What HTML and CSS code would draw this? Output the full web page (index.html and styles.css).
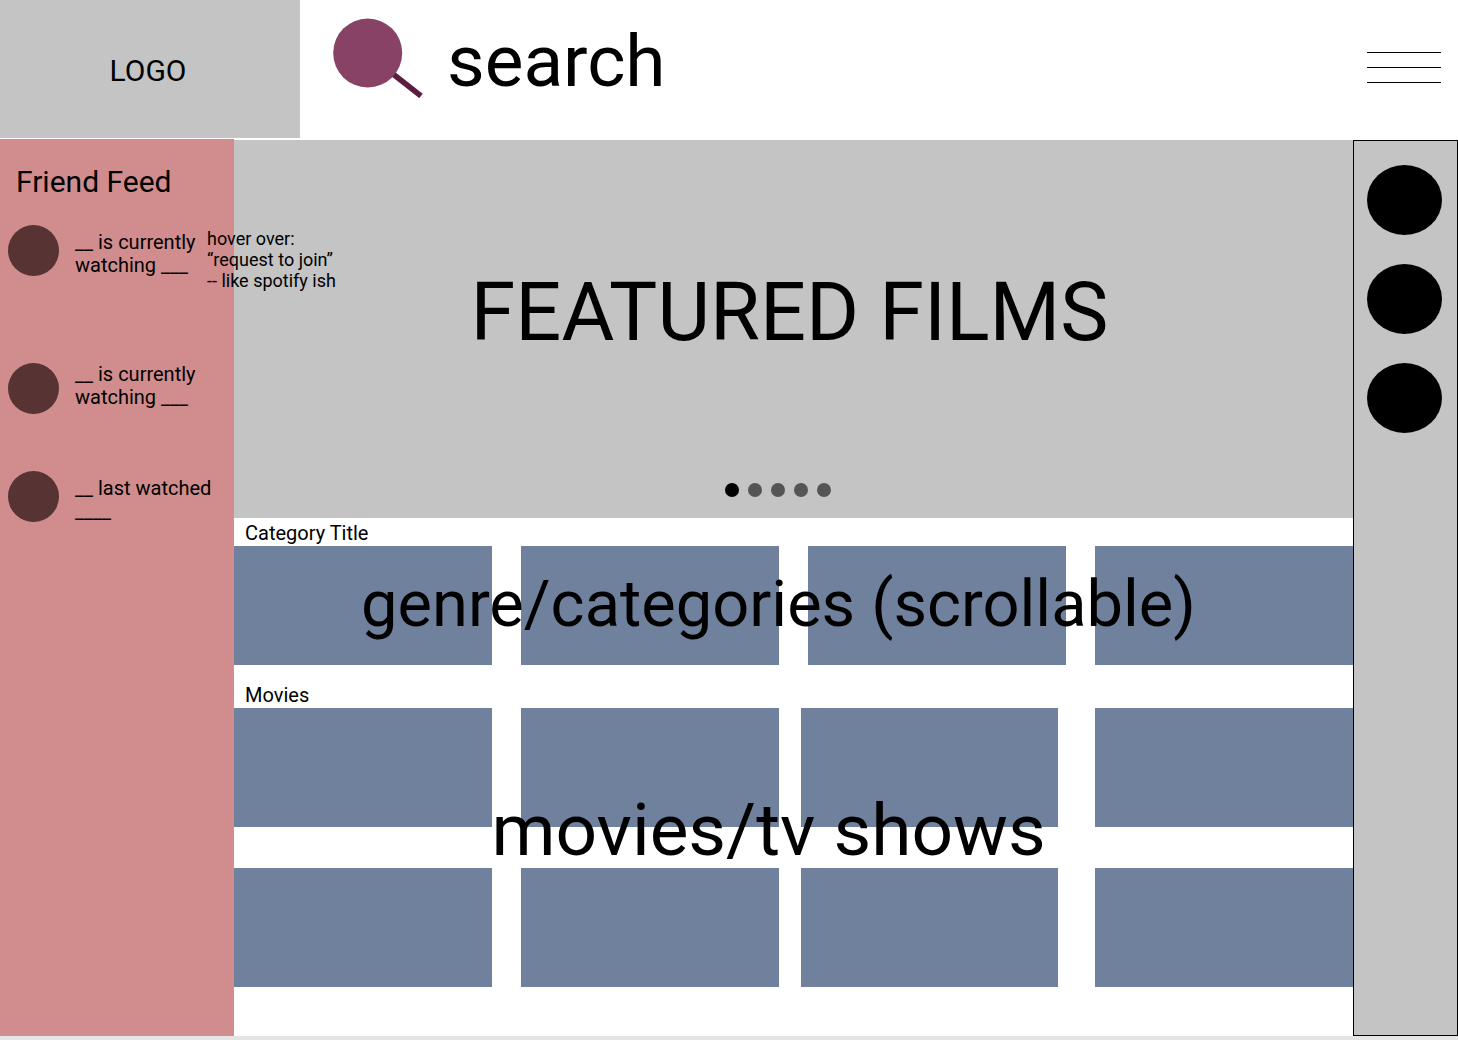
FILE: index.html
```html
<!DOCTYPE html>
<html lang="en">
<head>
<meta charset="utf-8">
<meta name="viewport" content="width=device-width, initial-scale=1">
<title>Featured Films</title>
<link rel="stylesheet" href="styles.css">
</head>
<body>
<div class="app">
  <header class="topbar">
    <a class="logo" href="#">LOGO</a>
    <form class="search" role="search">
      <label class="search-label" for="search" aria-label="Search">
        <svg width="90" height="80" viewBox="0 0 90 80" aria-hidden="true">
          <path d="M60 56 88 78" stroke="#5c1d40" stroke-width="5.5"/>
          <circle cx="34.700" cy="35" r="34.500" fill="#874266"/>
        </svg>
      </label>
      <input class="search-input" id="search" type="text" placeholder="search">
    </form>
    <button class="menu" type="button" aria-label="Menu">
      <span class="menu-line"></span>
      <span class="menu-line"></span>
      <span class="menu-line"></span>
    </button>
  </header>
  <div class="layout">
    <aside class="feed">
      <h2 class="feed-title">Friend Feed</h2>
      <ul class="feed-list">
        <li class="friend friend-joinable">
          <span class="avatar"></span>
          <p class="status">__ is currently watching ___</p>
          <p class="join-note">hover over:<br>“request to join”<br>-- like spotify ish</p>
        </li>
        <li class="friend">
          <span class="avatar"></span>
          <p class="status">__ is currently watching ___</p>
        </li>
        <li class="friend friend-past">
          <span class="avatar"></span>
          <p class="status">__ last watched ____</p>
        </li>
      </ul>
    </aside>
    <main class="content">
      <section class="featured">
        <h1 class="featured-title">FEATURED FILMS</h1>
        <div class="dots">
          <button class="dot dot-active" type="button" aria-label="Slide 1"></button>
          <button class="dot" type="button" aria-label="Slide 2"></button>
          <button class="dot" type="button" aria-label="Slide 3"></button>
          <button class="dot" type="button" aria-label="Slide 4"></button>
          <button class="dot" type="button" aria-label="Slide 5"></button>
        </div>
      </section>
      <section class="shelf">
        <h2 class="shelf-title">Category Title</h2>
        <div class="rows">
          <ul class="row">
            <li class="card"></li><li class="card"></li><li class="card"></li><li class="card"></li>
          </ul>
          <p class="caption caption-genres">genre/categories (scrollable)</p>
        </div>
      </section>
      <section class="shelf shelf-movies">
        <h2 class="shelf-title">Movies</h2>
        <div class="rows">
          <ul class="row row-staggered">
            <li class="card"></li><li class="card"></li><li class="card"></li><li class="card"></li>
          </ul>
          <ul class="row row-staggered">
            <li class="card"></li><li class="card"></li><li class="card"></li><li class="card"></li>
          </ul>
          <p class="caption caption-movies">movies/tv shows</p>
        </div>
      </section>
    </main>
    <nav class="rail" aria-label="Profiles">
      <button class="profile" type="button" aria-label="Profile 1"></button>
      <button class="profile" type="button" aria-label="Profile 2"></button>
      <button class="profile" type="button" aria-label="Profile 3"></button>
    </nav>
  </div>
</div>
</body>
</html>
```
FILE: styles.css
```css
* {
  box-sizing: border-box;
}

body {
  margin: 0;
  background: #e5e5e5;
  color: #000;
  font-family: Roboto, "Liberation Sans", sans-serif;
  font-size: 20px;
  line-height: 23px;
}

h1, h2, p, ul {
  margin: 0;
  padding: 0;
  font-weight: 400;
}

ul {
  list-style: none;
}

button {
  padding: 0;
  border: 0;
  cursor: pointer;
}

.app {
  display: flex;
  flex-direction: column;
  min-height: calc(100vh - 4px);
  margin-bottom: 4px;
  background: #fff;
}

/* Top bar */
.topbar {
  display: flex;
  align-items: flex-start;
  padding-bottom: 1px;
}

.logo {
  display: flex;
  flex: none;
  align-items: center;
  justify-content: center;
  width: 300px;
  height: 138px;
  padding: 2px 4px 0 0;
  background: #c4c4c4;
  color: inherit;
  font-size: 30px;
  text-decoration: none;
}

.search {
  display: flex;
  flex: 1;
  gap: 24px;
  min-width: 0;
  padding: 18px 32px 0 33px;
}

.search-label svg {
  display: block;
}

.search-input {
  flex: 1;
  min-width: 0;
  height: 86px;
  padding: 0;
  border: 0;
  outline: 0;
  background: none;
  color: inherit;
  font: inherit;
  font-size: 73px;
  line-height: 86px;
}

.search-input::placeholder {
  color: #000;
  opacity: 1;
}

.menu {
  display: flex;
  flex: none;
  flex-direction: column;
  gap: 14px;
  width: 74px;
  margin: 52px 17px 0 0;
  background: none;
}

.menu-line {
  width: 100%;
  height: 1px;
  background: #000;
}

/* Columns under the bar */
.layout {
  display: grid;
  flex: 1;
  grid-template-columns: 234px 1fr 105px;
}

/* Friend feed */
.feed {
  padding: 25px 8px 0;
  background: #d18d8d;
}

.feed-title {
  padding-left: 8px;
  font-size: 30px;
  line-height: 35px;
}

.feed-list {
  padding-top: 26px;
}

.friend {
  position: relative;
  display: flex;
  align-items: flex-start;
  gap: 16px;
  margin-bottom: 57px;
}

.friend-joinable {
  margin-bottom: 86px;
}

.avatar {
  flex: none;
  width: 51px;
  height: 51px;
  border-radius: 50%;
  background: #573333;
}

.status {
  flex: 1;
}

.friend-joinable .status,
.friend-past .status {
  padding-top: 6px;
}

.join-note {
  position: absolute;
  top: 3px;
  left: 199px;
  z-index: 1;
  font-size: 18px;
  line-height: 21px;
  white-space: nowrap;
}

/* Featured */
.content {
  min-width: 0;
  padding-top: 1px;
}

.featured {
  display: flex;
  flex-direction: column;
  align-items: center;
  height: 378px;
  padding: 126px 0 21px;
  background: #c4c4c4;
}

.featured-title {
  padding-right: 8px;
  font-size: 81px;
  line-height: 94px;
}

.dots {
  display: flex;
  gap: 9px;
  margin-top: auto;
  padding-right: 32px;
}

.dot {
  width: 14px;
  height: 14px;
  border-radius: 50%;
  background: #555;
}

.dot-active {
  background: #000;
}

/* Shelves */
.shelf {
  padding-top: 4px;
}

.shelf-movies {
  padding-top: 19px;
}

.shelf-title {
  padding: 0 0 1px 11px;
  font-size: 20px;
  line-height: 23px;
}

.rows {
  position: relative;
  display: grid;
  gap: 41px;
}

.row {
  display: flex;
}

.card {
  flex: 1;
  height: 119px;
  background: #70819d;
}

.card + .card {
  margin-left: 29px;
}

.row-staggered .card:nth-child(3) {
  margin-left: 22px;
}

.row-staggered .card:nth-child(4) {
  margin-left: 37px;
}

.caption {
  position: absolute;
  right: 0;
  left: 0;
  text-align: center;
  white-space: nowrap;
}

.caption-genres {
  top: 20px;
  padding-right: 30px;
  font-size: 65px;
  line-height: 76px;
}

.caption-movies {
  top: 80px;
  padding-right: 50px;
  font-size: 73px;
  line-height: 84px;
}

/* Profile rail */
.rail {
  display: flex;
  flex-direction: column;
  align-items: center;
  gap: 29px;
  margin-top: 1px;
  padding: 24px 2px 24px 0;
  border: 1px solid #000;
  background: #c4c4c4;
}

.profile {
  width: 75px;
  height: 70px;
  border-radius: 50%;
  background: #000;
}
```
